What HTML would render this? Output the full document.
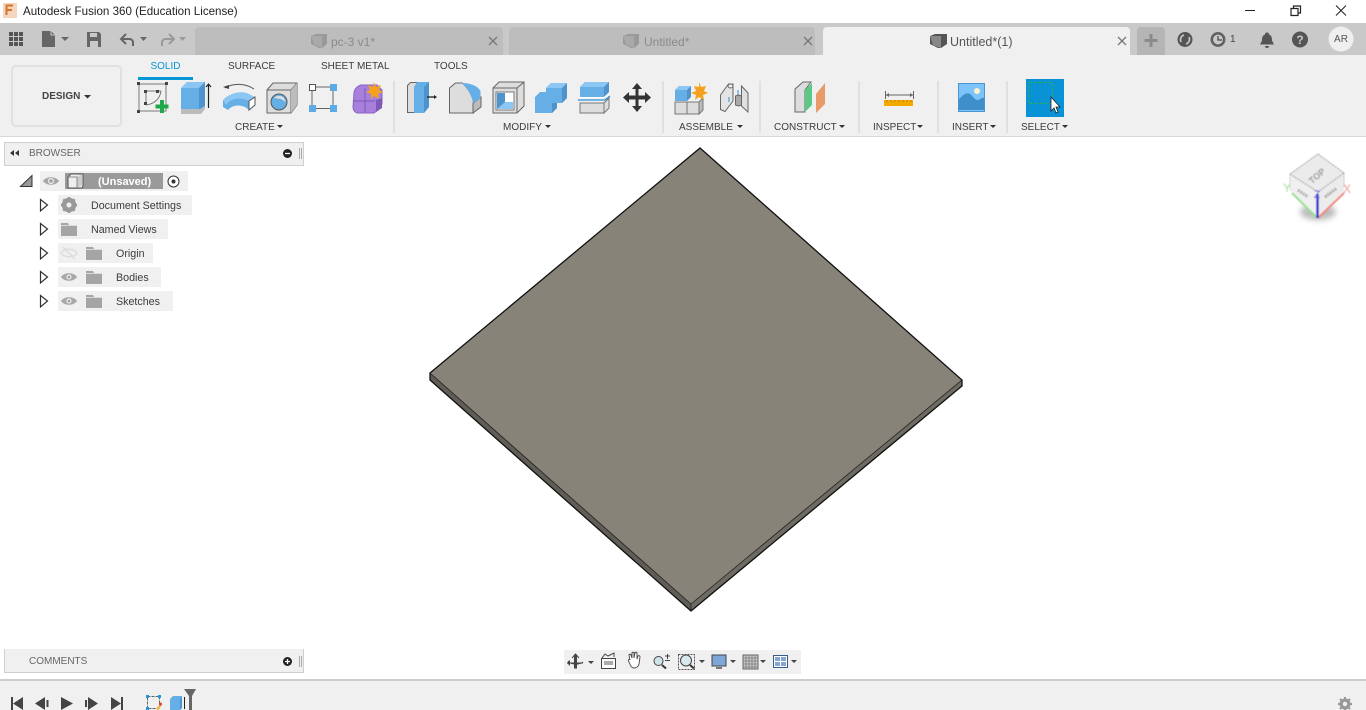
<!DOCTYPE html>
<html><head><meta charset="utf-8"><title>Autodesk Fusion 360</title>
<style>
html,body{margin:0;padding:0;width:1366px;height:710px;overflow:hidden;background:#fff;font-family:"Liberation Sans",sans-serif}
.a{position:absolute}
.t{position:absolute;white-space:nowrap;color:#3c3c3c;font-size:10px;line-height:14px}
.c{text-align:center}
.row{position:absolute;background:#f0f0f0;height:20px}
svg{position:absolute;left:0;top:0}
</style></head><body>
<div class="a" style="left:0;top:23px;width:1366px;height:32px;background:#c9c9c9"></div>
<div class="a" style="left:195px;top:27px;width:308px;height:28px;background:#bdbdbd;border-radius:4px 4px 0 0"></div>
<div class="a" style="left:509px;top:27px;width:306px;height:28px;background:#bdbdbd;border-radius:4px 4px 0 0"></div>
<div class="a" style="left:823px;top:27px;width:307px;height:28px;background:#f0f0f0;border-radius:4px 4px 0 0"></div>
<div class="a" style="left:1137px;top:27px;width:28px;height:28px;background:#b5b5b5;border-radius:4px 4px 0 0"></div>
<div class="a" style="left:0;top:55px;width:1366px;height:81px;background:#f0f0f0;border-bottom:1px solid #d9d9d9"></div>
<div class="a" style="left:11px;top:65px;width:107px;height:58px;border:2px solid #e0e0e0;border-radius:5px"></div>
<div class="a" style="left:138px;top:77px;width:55px;height:3px;background:#0696d7"></div>
<div class="a" style="left:393px;top:81px;width:2px;height:52px;background:#e0e0e0"></div>
<div class="a" style="left:662px;top:81px;width:2px;height:52px;background:#e0e0e0"></div>
<div class="a" style="left:759px;top:81px;width:2px;height:52px;background:#e0e0e0"></div>
<div class="a" style="left:858px;top:81px;width:2px;height:52px;background:#e0e0e0"></div>
<div class="a" style="left:937px;top:81px;width:2px;height:52px;background:#e0e0e0"></div>
<div class="a" style="left:1006px;top:81px;width:2px;height:52px;background:#e0e0e0"></div>

<div class="a" style="left:4px;top:142px;width:298px;height:22px;background:#f0f0f0;border:1px solid #cfcfcf"></div>
<div class="a" style="left:4px;top:649px;width:298px;height:23px;background:#f0f0f0;border:1px solid #cfcfcf;border-top:none"></div>
<div class="row" style="left:40px;top:171px;width:148px"></div>
<div class="a" style="left:65px;top:173px;width:98px;height:16px;background:#9a9a9a"></div>
<div class="row" style="left:58px;top:195px;width:134px"></div>
<div class="row" style="left:58px;top:219px;width:110px"></div>
<div class="row" style="left:58px;top:243px;width:95px"></div>
<div class="row" style="left:58px;top:267px;width:103px"></div>
<div class="row" style="left:58px;top:291px;width:115px"></div>
<div class="a" style="left:564px;top:650px;width:237px;height:24px;background:#f0f0f0"></div>
<div class="a" style="left:0;top:679px;width:1366px;height:31px;background:#f0f0f0;border-top:2px solid #cdcdcd;box-sizing:border-box"></div>

<svg width="1366" height="710" viewBox="0 0 1366 710" fill="none">
<defs><filter id="b" x="-30%" y="-30%" width="160%" height="160%"><feGaussianBlur stdDeviation="0.5"/></filter><filter id="s" x="-50%" y="-50%" width="200%" height="200%"><feGaussianBlur stdDeviation="3"/></filter></defs>
<!-- model -->
<polygon points="430,373 691,604 691,611 430,380" fill="#5f5d55"/>
<polygon points="691,604 962,380 962,386 691,611" fill="#6e6b62"/>
<polygon points="700,148 962,380 691,604 430,373" fill="#878378"/>
<path d="M430,373 L700,148 L962,380 L962,386 L691,611 L430,380 Z" stroke="#111" stroke-width="1.300"/>
<path d="M430,373 L691,604 L962,380 M691,604 V611" stroke="#222" stroke-width="0.800"/>

<!-- app icon -->
<rect x="3" y="3" width="14" height="15" rx="1" fill="#f4d5bd"/>
<path d="M6.500 15V5.500H13M6.500 10H12" stroke="#d9722a" stroke-width="2"/>
<!-- window controls -->
<path d="M1245 10.500H1255M1346 5.500L1336 15.500 M1336 5.500L1346 15.500" stroke="#222" stroke-width="1"/>
<path d="M1291 8.500h7v7h-7zM1293.500 8V6h7v7h-2" stroke="#222" stroke-width="1.200"/>
<!-- grid -->
<g fill="#555"><rect x="9" y="32" width="4" height="4"/><rect x="14" y="32" width="4" height="4"/><rect x="19" y="32" width="4" height="4"/><rect x="9" y="37" width="4" height="4"/><rect x="14" y="37" width="4" height="4"/><rect x="19" y="37" width="4" height="4"/><rect x="9" y="42" width="4" height="4"/><rect x="14" y="42" width="4" height="4"/><rect x="19" y="42" width="4" height="4"/></g>
<!-- file -->
<path d="M42 31h9l4 4v12H42z" fill="#666"/><path d="M51 31v4h4" stroke="#c9c9c9"/>
<path d="M61 37h8l-4 4z" fill="#666"/>
<!-- save -->
<path d="M87 32h12l2 2v13H87z" fill="#666"/><rect x="90" y="33" width="7" height="4" fill="#c9c9c9"/><rect x="90" y="41" width="8" height="6" fill="#c9c9c9"/>
<!-- undo / redo -->
<path d="M122 39h8a3.500 3.500 0 0 1 3 4v3M126 34l-5 5 5 5" stroke="#666" stroke-width="2"/>
<path d="M140 37h7l-3.500 4z" fill="#666"/>
<path d="M173 39h-8a3.500 3.500 0 0 0-3 4v3M169 34l5 5-5 5" stroke="#999" stroke-width="2"/>
<path d="M179 37h7l-3.500 4z" fill="#999"/>
<!-- tab cubes -->
<path d="M311 36l5-2h11v10l-5 4h-3l-8-4z" fill="#999"/><path d="M311 36h11v12l-8-3z" fill="#a9a9a9"/>
<path d="M623 36l5-2h11v10l-5 4h-3l-8-4z" fill="#999"/><path d="M623 36h11v12l-8-3z" fill="#a9a9a9"/>
<path d="M930 36l5-2h12v10l-6 4h-3l-8-4z" fill="#555"/><path d="M930 36h11v12l-8-3z" fill="#888"/>
<!-- tab x -->
<path d="M489 37l8 8M497 37l-8 8M804 37l8 8M812 37l-8 8M1118 37l8 8M1126 37l-8 8" stroke="#777" stroke-width="1.300"/>
<path d="M1151 34v13M1144.500 40.500h13" stroke="#8a8a8a" stroke-width="3"/>
<!-- right top icons -->
<circle cx="1185" cy="39.500" r="7.500" fill="#555"/><path d="M1181 42a5 5 0 0 1 3-7M1189 37a5 5 0 0 1-3 7" stroke="#c9c9c9" stroke-width="1.600"/>
<circle cx="1218" cy="39.500" r="7.500" fill="#666"/><circle cx="1218" cy="39.500" r="5.500" fill="#c9c9c9" stroke="#555"/><path d="M1218 36v4h4" stroke="#444" stroke-width="1.200"/>
<path d="M1267 32.500a2 2 0 0 1 2 2c3 1 3 4 3 6l2 4h-14l2-4c0-2 0-5 3-6a2 2 0 0 1 2-2z M1265 46h4a2 2 0 0 1-4 0z" fill="#555"/>
<circle cx="1300" cy="39.500" r="8" fill="#555"/>
<circle cx="1341" cy="39" r="12.500" fill="#efefef"/>

<!-- sketch -->
<g><path d="M139 84h27v27h-27z" stroke="#777"/><path d="M146 91h15M146 91v14M146 105c8-1 14-6 15-14" stroke="#777"/>
<g fill="#444"><rect x="137" y="82" width="3" height="3"/><rect x="165" y="82" width="3" height="3"/><rect x="137" y="110" width="3" height="3"/><rect x="144" y="90" width="3" height="3"/><rect x="156" y="90" width="3" height="3"/><rect x="144" y="102" width="3" height="3"/></g>
<path d="M162 100v13M155.500 106.500h13" stroke="#1fa84a" stroke-width="4"/></g>
<!-- extrude -->
<path d="M181 88l6-6h18v24l-4 3H181z" fill="#65aee6"/><path d="M181 88h18l6-6H187z" fill="#8cc6f2"/><path d="M199 88l6-6v24l-6 3z" fill="#4e93cc"/>
<path d="M181 109h20l4-3v3l-4 5H181z" fill="#bbb"/><path d="M208.500 108V84M206 87l2.500-3 2.500 3" stroke="#222" stroke-width="1.200"/>
<!-- sweep -->
<path d="M225 88c8-5 20-5 29 1" stroke="#555"/><path d="M223 87l6-2v4z" fill="#444"/>
<path d="M223 100c5-4 22-6 26 1v9c-6-6-16-6-21 0l-5-3z" fill="#65aee6"/>
<path d="M223 100c6-7 19-10 26-6l6 3-6 4c-8-4-18-3-23 4z" fill="#8cc6f2"/>
<path d="M249 101l6-4v8l-6 5z" fill="#fff" stroke="#555"/>
<!-- hole -->
<path d="M267 90l6-7h24v22l-6 8h-24z" fill="#ddd" stroke="#666"/><path d="M267 90h24v23M291 90l6-7" stroke="#666"/><path d="M291 90l6-7v22l-6 8z" fill="#bcbcbc"/>
<circle cx="279" cy="102" r="8" fill="#65aee6" stroke="#555"/><path d="M274 98a7 7 0 0 1 10 0l2 4-5-3z" fill="#ddd"/>
<!-- pattern -->
<path d="M312 87h18M312 89v17M333 90v16" stroke="#666" stroke-width="1"/><path d="M316 108.500h14" stroke="#666"/>
<rect x="309.500" y="84.500" width="6" height="6" fill="#fff" stroke="#555"/><rect x="330" y="84" width="7" height="7" fill="#5caae6"/><rect x="309" y="105" width="7" height="7" fill="#5caae6"/><rect x="330" y="105" width="7" height="7" fill="#5caae6"/>
<!-- create form -->
<path d="M354 93c0-3 3-7 7-8l16 0 5 5v14l-4 6-4 3h-16c-3 0-5-3-5-6z" fill="#a780de" stroke="#8a60c4"/><path d="M353 101h22M365 88v24" stroke="#7f58b8"/><path d="M376 100l6-2v10l-6 4z" fill="#7f58b8"/>
<path d="M374 82l2 5 5-2-2 5 4 2-5 2 1 5-5-3-3 3v-5l-5-2 4-2-2-5 5 2z" fill="#f4a21e"/>

<!-- press pull -->
<path d="M407.500 85.500l3-3h7v30h-10z" fill="#ddd" stroke="#666"/><path d="M414 87l3-5h12v25l-5 6h-10z" fill="#65aee6"/><path d="M424 87l5-5v25l-5 6z" fill="#4e93cc"/><path d="M427 97h8" stroke="#222" stroke-width="1.300"/><path d="M434 95l3 2-3 2z" fill="#222"/>
<!-- fillet -->
<path d="M449.500 88l6-5h7c6 6 10 12 11 19v11h-24z" fill="#ddd" stroke="#666"/>
<path d="M473 103l8-6v10l-8 6z" fill="#bbb" stroke="#666"/>
<path d="M462 83c8 0 16 3 18.500 8v7l-7.500 5c-1-7-5-14-11-20z" fill="#65aee6"/>
<!-- shell -->
<path d="M493 113V88l6-6h25v24l-7 7z" fill="#ddd" stroke="#666"/><path d="M493 88h24v25M517 88l7-6" stroke="#666"/><rect x="496" y="92" width="18" height="18" fill="#fff" stroke="#777"/><path d="M497 93h8v9h8v7h-16z" fill="#4e93cc"/><path d="M497 109l8-7h8v7z" fill="#8cc6f2"/>
<!-- combine -->
<path d="M535 97l5-5h6v-4l5-5h16v15l-5 5h-5v5l-5 5h-17z" fill="#65aee6"/>
<path d="M562 88l5-5v15l-5 5z" fill="#4e93cc"/><path d="M546 88l5-5h16l-5 5z" fill="#8cc6f2"/><path d="M552 103h5v5l-5 5z" fill="#4e93cc"/>
<!-- split -->
<path d="M580 87l5-5h24v10l-5 5h-24z" fill="#65aee6"/><path d="M580 87h24l5-5h-24z" fill="#8cc6f2"/><path d="M604 87l5-5v10l-5 5z" fill="#4e93cc"/>
<path d="M578 100h27l5-4" stroke="#2b8fdc" stroke-width="1.200"/><path d="M580 103h24v10h-24zM604 103l5-5v10l-5 5z" fill="#ddd" stroke="#777"/><path d="M578 97.500h26l5-4" stroke="#fff"/>
<!-- move -->
<path d="M637 83l5 6h-3.500v6.500H645V92l6 5.500-6 5.500v-3.500h-6.500v6.500H642l-5 6-5-6h3.500v-6.500H629v3.500l-6-5.500 6-5.500v3.500h6.500V89H632z" fill="#333"/>

<!-- new component -->
<path d="M675 102h12v12h-12zM687 102h12v12h-12z" fill="#ddd" stroke="#777"/><path d="M699 102l4-4v12l-4 4z" fill="#bbb" stroke="#777"/>
<path d="M675 90l4-4h12v10l-4 5h-12z" fill="#65aee6"/><path d="M687 90l4-4v11l-4 4z" fill="#4e93cc"/><path d="M675 90h12l4-4h-12z" fill="#8cc6f2"/>
<path d="M699 82l2 5 5-1-2 5 4 2-5 2 1 5-5-3-4 3 1-5-5-2 5-2-2-5 5 1z" fill="#f4a21e"/>
<!-- joint -->
<path d="M720.500 95l8-11h4.500v17l-8 10.500-4.500-2z" fill="#e4e4e4" stroke="#666"/><ellipse cx="730.500" cy="86" rx="2.500" ry="2" fill="#eee" stroke="#666"/><path d="M729 97v5M738 90v5" stroke="#2b8fdc"/>
<path d="M741.500 86l6.500 7v19l-6.500-6z" fill="#e0e0e0" stroke="#666"/><path d="M735.500 96l3-1 3 1v9l-3 1-3-1z" fill="#aaa" stroke="#666"/>

<!-- construct -->
<path d="M795 89l8-7h8l-6 8v22h-10z" fill="#ddd" stroke="#666"/><path d="M805 90l7-7v22l-7 7z" fill="#5dc987"/>
<path d="M816 94l9-11v21l-9 9z" fill="#e89a68"/>
<!-- inspect -->
<path d="M885.500 91v8M913.500 91v8M885.500 95h28" stroke="#666"/><path d="M889 93l-3 2 3 2zM910 93l3 2-3 2z" fill="#666"/>
<rect x="884" y="100" width="29" height="6" fill="#f2a900"/><path d="M887 100v2M891 100v2M895 100v2M899 100v2M903 100v2M907 100v2M911 100v2" stroke="#a87600" stroke-width=".7"/>
<!-- insert -->
<rect x="958.500" y="83.500" width="26" height="28" fill="#7cc4fa" stroke="#4a95cd"/><path d="M959 109v-10c4-4 7-7 11-5 3 2 4 6 8 6 3-1 4-3 6-2v12h-25z" fill="#3f8fcb"/><circle cx="977" cy="91" r="3" fill="#fdf3c8"/>
<!-- select -->
<rect x="1026" y="79" width="38" height="38" fill="#0a92d6"/><rect x="1028.500" y="82.500" width="24" height="21" stroke="#2fb04c" stroke-dasharray="3 2"/>
<path d="M1051 97v14l3-3 2 5 2-1-2-5h4z" fill="#fff" stroke="#222" stroke-width=".8"/>

<!-- browser -->
<path d="M14 150v6l-4-3zM19 150v6l-4-3z" fill="#333"/>
<circle cx="287.500" cy="153.500" r="4.500" fill="#222"/><path d="M285 153.500h5" stroke="#fff" stroke-width="1.300"/>
<path d="M299.500 148v11M301.500 148v11" stroke="#aaa"/>
<circle cx="287.500" cy="661.500" r="4.500" fill="#222"/><path d="M285 661.500h5M287.500 659v5" stroke="#fff" stroke-width="1.300"/>
<path d="M299.500 656v11M301.500 656v11" stroke="#aaa"/>
<path d="M20.500 186.500L32 175.500v11z" fill="#999" stroke="#333"/>
<path d="M43 181c3-5 13-5 16 0-3 5-13 5-16 0z" fill="#a8a8a8"/><circle cx="51" cy="181" r="3" fill="#f0f0f0"/><circle cx="51" cy="181" r="1.800" fill="#a0a0a0"/>
<path d="M68 177l3-3h12v12l-1 2H68z" fill="#eee" stroke="#555"/><path d="M77 177l5-3v11l-5 3z" fill="#ccc"/><path d="M68 177h9v11" stroke="#888"/>
<circle cx="173.500" cy="181.500" r="5.500" fill="#fff" stroke="#333"/><circle cx="173.500" cy="181.500" r="2" fill="#333"/>
<g fill="#fff" stroke="#333" stroke-width="1.200"><path d="M40.500 199.500l7 5.500-7 6z"/><path d="M40.500 223.500l7 5.500-7 6z"/><path d="M40.500 247.500l7 5.500-7 6z"/><path d="M40.500 271.500l7 5.500-7 6z"/><path d="M40.500 295.500l7 5.500-7 6z"/></g>
<circle cx="69" cy="205" r="5.500" stroke="#999" stroke-width="3.500"/><path d="M69 197v16M61 205h16M63.300 199.300l11.400 11.400M74.700 199.300l-11.400 11.400" stroke="#999" stroke-width="2.500"/><circle cx="69" cy="205" r="2.500" fill="#f0f0f0"/>
<path d="M61 223h7l1 2h8v11H61z" fill="#a5a5a5"/><path d="M61 225.500h16" stroke="#f0f0f0" stroke-width=".7"/>
<path d="M86 247h7l1 2h8v11H86z" fill="#a5a5a5"/><path d="M86 249.500h16" stroke="#f0f0f0" stroke-width=".7"/>
<path d="M86 271h7l1 2h8v11H86z" fill="#a5a5a5"/><path d="M86 273.500h16" stroke="#f0f0f0" stroke-width=".7"/>
<path d="M86 295h7l1 2h8v11H86z" fill="#a5a5a5"/><path d="M86 297.500h16" stroke="#f0f0f0" stroke-width=".7"/>
<path d="M61 253c3-5 13-5 16 0-3 5-13 5-16 0zM63 247l12 12" stroke="#ddd" stroke-width="1.500"/>
<path d="M61 277c3-5 13-5 16 0-3 5-13 5-16 0z" fill="#a8a8a8"/><circle cx="69" cy="277" r="2.500" fill="#f0f0f0"/><circle cx="69" cy="277" r="1.300" fill="#999"/>
<path d="M61 301c3-5 13-5 16 0-3 5-13 5-16 0z" fill="#a8a8a8"/><circle cx="69" cy="301" r="2.500" fill="#f0f0f0"/><circle cx="69" cy="301" r="1.300" fill="#999"/>

<!-- view cube -->
<ellipse cx="1318" cy="212" rx="18" ry="8" fill="#bbb" filter="url(#s)"/>
<g filter="url(#b)">
<path d="M1290 174l28 18v25l-27-25z" fill="#f0f0f0"/>
<path d="M1344 173l-26 19v25l26-26z" fill="#ececec"/>
<path d="M1318 154l26 19-26 19-28-18z" fill="#ebebeb" stroke="#999" stroke-dasharray="2 1"/>
<path d="M1290 174v16M1344 173v14" stroke="#bbb" stroke-dasharray="2 1"/>
<path d="M1298 190l10 7M1325 197l12-9" stroke="#aaa" stroke-width="3" stroke-dasharray="2 1"/>
<path d="M1317 218L1292 193" stroke="#9adf94" stroke-width="2"/><path d="M1318 218l26-25" stroke="#f08a80" stroke-width="2"/><path d="M1317.500 218V194" stroke="#3535d0" stroke-width="2.500"/>
<text x="1287" y="192" font-family="Liberation Sans" font-size="12" fill="#a8e0a0" text-anchor="middle">Y</text>
<text x="1347" y="193" font-family="Liberation Sans" font-size="12" fill="#f5a09a" text-anchor="middle">X</text>
<text x="1317" y="198" font-family="Liberation Sans" font-size="11" fill="#6060e0" text-anchor="middle">Z</text>
<text x="1317" y="179" font-family="Liberation Sans" font-size="9" font-weight="bold" fill="#999" text-anchor="middle" transform="rotate(-40 1317 176)">TOP</text>
</g>

<!-- nav bar -->
<path d="M575.500 654.500v14" stroke="#444" stroke-width="3"/><path d="M572 658l3.500-4 3.500 4M567 663h16M568 661c3 4 11 4 15 1" stroke="#444"/><path d="M570 660l-3 3 3 3z" fill="#444"/>
<path d="M588 661h6l-3 3z" fill="#444"/>
<rect x="601.500" y="658.500" width="14" height="10" fill="#fff" stroke="#444"/><rect x="604" y="661" width="9" height="4" fill="#aaa"/><path d="M602 658l3-4 3 2 6-3v4" stroke="#444"/>
<path d="M629 662c-2-3 1-3 1-2l-1-5c0-1 2-1 2 0l1 3v-5c0-1 2-1 2 0v5l1-5c0-1 2-1 2 0v6l1-3c1-1 2 0 2 1l-1 7c-1 3-3 4-5 4s-3-1-5-6z" fill="#fff" stroke="#444" stroke-width=".9"/>
<circle cx="658.500" cy="661" r="4.500" fill="#cfe5ea" stroke="#444"/><path d="M662 665l4 3.500" stroke="#333" stroke-width="2"/><path d="M665 656h5M667.500 654v5M665 660.500h5" stroke="#444"/>
<rect x="678.500" y="654.500" width="16" height="15" stroke="#555" stroke-dasharray="2 1"/><circle cx="686" cy="660.500" r="5.500" fill="#d6e9ec" stroke="#444"/><path d="M690 665l4 3.500" stroke="#333" stroke-width="2"/>
<path d="M699 660h6l-3 3z" fill="#444"/>
<rect x="712" y="655" width="14" height="11" fill="#7ea7d8" stroke="#444"/><path d="M716 667h6v2h-6z" fill="#777"/><path d="M730 660h6l-3 3z" fill="#444"/>
<rect x="743" y="655" width="15" height="14" fill="#ccc" stroke="#666"/><path d="M746 655v14M749 655v14M752 655v14M755 655v14M743 658h15M743 661h15M743 664h15M743 667h15" stroke="#777" stroke-width=".8"/><path d="M760 660h6l-3 3z" fill="#444"/>
<rect x="773.500" y="655.500" width="14" height="12" fill="#fff" stroke="#3c5c84"/><rect x="775" y="657" width="5" height="4" fill="#86a6d0"/><rect x="781" y="657" width="5" height="4" fill="#86a6d0"/><rect x="775" y="662" width="5" height="4" fill="#86a6d0"/><rect x="781" y="662" width="5" height="4" fill="#86a6d0"/><path d="M791 660h6l-3 3z" fill="#444"/>

<!-- timeline -->
<path d="M11 697h2v13h-2zM23 697v13l-10-6.500z" fill="#444"/>
<path d="M45 697v13l-10-6.500zM46.500 700h2v7h-2z" fill="#444"/>
<path d="M61 697l12 6.500-12 6.500z" fill="#444"/>
<path d="M85 700h2v7h-2zM88 697l10 6.500-10 6.500z" fill="#444"/>
<path d="M111 697l10 6.500-10 6.500zM121 697h2v13h-2z" fill="#444"/>
<rect x="147.500" y="696.500" width="12" height="12" stroke="#666" stroke-dasharray="3 1"/><path d="M146 695h3v3h-3zM158 695h3v3h-3zM146 707h3v3h-3z" fill="#1e96e0"/><path d="M156 709l4-5 2 1-4 5z" fill="#f0b040"/><circle cx="160.500" cy="704" r="1.500" fill="#e04040"/>
<path d="M170 699l3-3h9v12l-2 2h-10z" fill="#65aee6"/><path d="M180 699l2-3v12l-2 2z" fill="#4e93cc"/><path d="M184.500 709v-12" stroke="#222"/>
<path d="M184 689h12l-4 7v14h-3v-14z" fill="#666"/>
<circle cx="1345" cy="704" r="4" stroke="#999" stroke-width="3"/><path d="M1345 697v14M1338 704h14M1340 699l10 10M1350 699l-10 10" stroke="#999" stroke-width="2.200"/><circle cx="1345" cy="704" r="2.200" fill="#f0f0f0"/>
<text x="1300" y="44" font-family="Liberation Sans" font-size="12" font-weight="bold" fill="#c9c9c9" text-anchor="middle">?</text>
<g fill="#333"><path d="M84 95h7l-3.500 3.500zM277 125h6l-3 3zM545 125h6l-3 3zM737 125h6l-3 3zM839 125h6l-3 3zM917 125h6l-3 3zM990 125h6l-3 3zM1062 125h6l-3 3z"/></g>
</svg>

<div class="t" style="left:23px;top:5px;font-size:11.600px;color:#222">Autodesk Fusion 360 (Education License)</div>
<div class="t" style="left:331px;top:35px;font-size:12px;color:#8a8a8a">pc-3 v1*</div>
<div class="t" style="left:644px;top:35px;font-size:12px;color:#8a8a8a">Untitled*</div>
<div class="t" style="left:950px;top:35px;font-size:12.500px;color:#555">Untitled*(1)</div>
<div class="t" style="left:1230px;top:33px;font-size:10px;color:#444">1</div>
<div class="t c" style="left:1329px;top:33px;width:24px;font-size:10px;color:#555">AR</div>
<div class="t" style="left:42px;top:90px;font-size:10px;font-weight:bold;color:#444">DESIGN</div>
<div class="t c" style="left:138px;top:60px;width:55px;color:#0696d7">SOLID</div>
<div class="t" style="left:228px;top:60px">SURFACE</div>
<div class="t" style="left:321px;top:60px">SHEET METAL</div>
<div class="t" style="left:434px;top:60px">TOOLS</div>
<div class="t" style="left:235px;top:121px">CREATE</div>
<div class="t" style="left:503px;top:121px">MODIFY</div>
<div class="t" style="left:679px;top:121px">ASSEMBLE</div>
<div class="t" style="left:774px;top:121px">CONSTRUCT</div>
<div class="t" style="left:873px;top:121px">INSPECT</div>
<div class="t" style="left:952px;top:121px">INSERT</div>
<div class="t" style="left:1021px;top:121px">SELECT</div>
<div class="t" style="left:29px;top:147px;color:#666">BROWSER</div>
<div class="t" style="left:29px;top:655px;color:#666">COMMENTS</div>
<div class="t" style="left:98px;top:175px;font-weight:bold;color:#fff;font-size:11px">(Unsaved)</div>
<div class="t" style="left:91px;top:199px;font-size:10.700px">Document Settings</div>
<div class="t" style="left:91px;top:223px;font-size:10.700px">Named Views</div>
<div class="t" style="left:116px;top:247px;font-size:10.700px">Origin</div>
<div class="t" style="left:116px;top:271px;font-size:10.700px">Bodies</div>
<div class="t" style="left:116px;top:295px;font-size:10.700px">Sketches</div>
</body></html>
